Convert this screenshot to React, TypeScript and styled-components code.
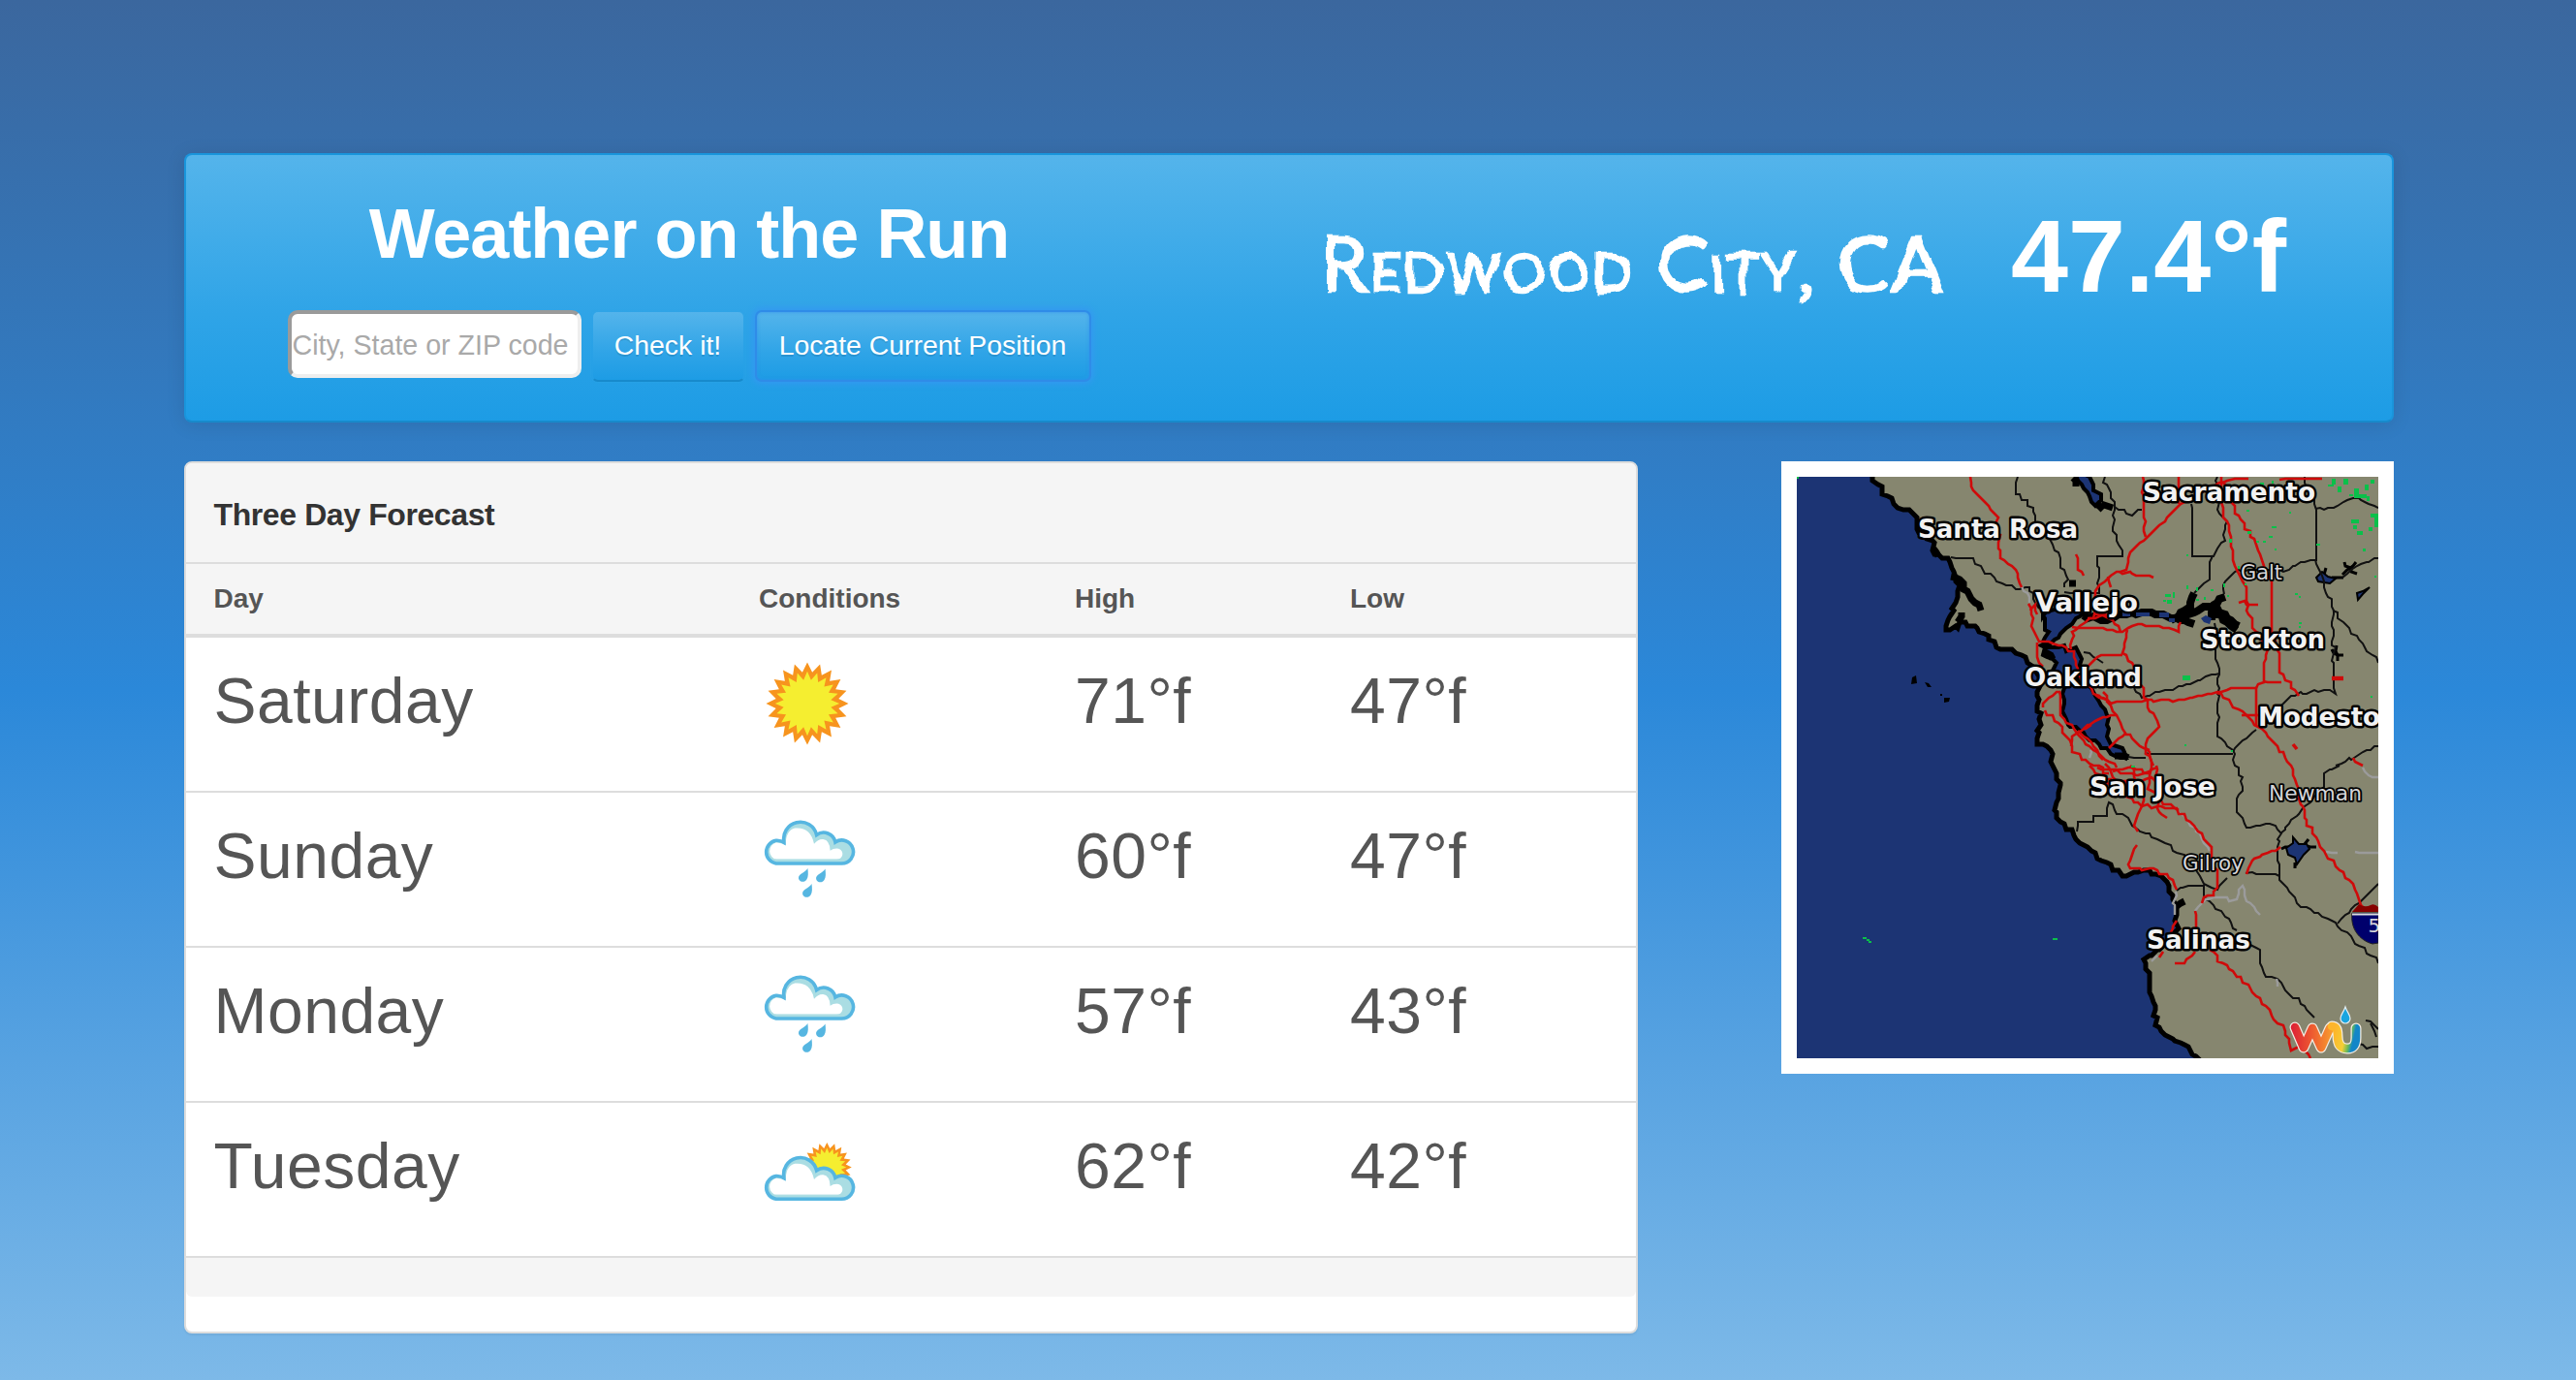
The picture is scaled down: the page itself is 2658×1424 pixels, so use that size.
import React from "react";
import styled, { createGlobalStyle } from "styled-components";

const SANS = '"Liberation Sans", Arial, sans-serif';

const GlobalStyle = createGlobalStyle`
  body {
    margin: 0;
    font-family: ${SANS};
    background: #7db9e8;
  }
  * { box-sizing: border-box; }
`;

const Page = styled.main`
  height: 1424px;
  padding: 158px 188px 0 190px;
  overflow: hidden;
  background: linear-gradient(to bottom, #3b679e 0%, #2b88d9 50%, #7db9e8 100%);
`;

const Banner = styled.header`
  display: flex;
  height: 278px;
  border: 2px solid #1995dc;
  border-bottom-color: #178acc;
  border-radius: 8px;
  background: linear-gradient(#54b4eb, #2fa4e7 60%, #1d9ce5);
  box-shadow: 0 2px 20px rgba(0, 0, 0, 0.1);
  color: #fff;
`;

const SearchArea = styled.div`
  display: flex;
  flex-direction: column;
  align-items: center;
  gap: 39px;
  width: 1038px;
  padding-top: 41px;
`;

const Title = styled.h1`
  margin: 0;
  font-size: 72px;
  line-height: 80px;
  font-weight: 700;
  letter-spacing: -1px;
`;

const SearchForm = styled.form`
  display: flex;
  align-items: flex-start;
  gap: 10px;
`;

const PlaceInput = styled.input`
  width: 303px;
  height: 70px;
  padding: 3px 1px 0;
  border: 4px inset;
  border-color: #9a9a9a #eeeeee #eeeeee #9a9a9a;
  border-style: solid;
  border-radius: 10px;
  background: #fff;
  font: 28.6px ${SANS};
  outline: none;
  &::placeholder { color: #a9a9a9; opacity: 1; }
`;

const ActionButton = styled.button<{ $width: number; $focused?: boolean }>`
  width: ${(p) => p.$width}px;
  height: 74px;
  padding: 0 0 2px;
  border: 2px solid ${(p) => (p.$focused ? "#2f8ce8" : "transparent")};
  border-bottom-color: ${(p) => (p.$focused ? "#2f8ce8" : "#178acc")};
  border-radius: 7px;
  background: linear-gradient(#54b4eb, #2fa4e7 60%, #1d9ce5) padding-box;
  box-shadow: ${(p) =>
    p.$focused
      ? "0 0 6px 2px #3598f2, inset 0 0 3px 1px rgba(47, 143, 240, 0.5)"
      : "0 0 0 1px rgba(47, 164, 231, 0.3)"};
  color: #fff;
  font: 28.4px ${SANS};
  white-space: nowrap;
  text-shadow: 0 2px 0 rgba(0, 0, 0, 0.1);
`;

const CurrentWeather = styled.div`
  display: flex;
  align-items: baseline;
  padding: 44px 0 0 132px;
  line-height: 120px;
  white-space: nowrap;
`;

const City = styled.span`
  width: 713px;
  font-family: Lato, "Open Sans", sans-serif;
  font-size: 79px;
  font-variant: small-caps;
  letter-spacing: 2.3px;
  -webkit-text-stroke: 2.4px #fff;
  filter: url(#handDrawn);
`;

const FilterDefs = styled.svg`
  position: absolute;
`;

const Temperature = styled.span`
  font-size: 106px;
  font-weight: 700;
`;

const Content = styled.div`
  display: flex;
  justify-content: space-between;
  align-items: flex-start;
  margin-top: 40px;
`;

const Panel = styled.section`
  width: 1500px;
  height: 900px;
  border: 2px solid #ddd;
  border-radius: 8px;
  background: #fff;
  box-shadow: 0 2px 2px rgba(0, 0, 0, 0.05);
  overflow: hidden;
`;

const PanelHeading = styled.h2`
  height: 104px;
  margin: 0;
  padding: 33px 28.5px 0;
  border-bottom: 2px solid #ddd;
  background: #f5f5f5;
  color: #333;
  font-size: 32px;
  line-height: 40px;
  letter-spacing: -0.4px;
`;

const Columns = styled.div`
  display: grid;
  grid-template-columns: 562.5px 326px 284px 1fr;
  padding-left: 28.5px;
  color: #555;
`;

const HeaderRow = styled(Columns)`
  height: 76px;
  padding-top: 16px;
  border-bottom: 4px solid #ddd;
  background: #f5f5f5;
  font-size: 28px;
  line-height: 40px;
  font-weight: 700;
`;

const ForecastRow = styled(Columns)`
  height: 160px;
  padding-top: 18px;
  border-bottom: 2px solid #ddd;
  font-size: 66px;
  line-height: 94px;
  letter-spacing: 0.5px;
`;

const IconCell = styled.div`
  line-height: 0;
`;

const PanelFooter = styled.div`
  height: 40px;
  border-radius: 0 0 6px 6px;
  background: #f5f5f5;
`;

const MapFrame = styled.figure`
  width: 632px;
  height: 632px;
  margin: 0;
  padding: 16px;
  background: #fff;
`;

type Pt = [number, number];

function star(cx: number, cy: number, outer: number, inner: number, points = 20) {
  const out: string[] = [];
  for (let i = 0; i < points * 2; i++) {
    const r = i % 2 ? inner : outer;
    const a = (Math.PI * i) / points - Math.PI / 2;
    out.push(`${(cx + r * Math.cos(a)).toFixed(2)},${(cy + r * Math.sin(a)).toFixed(2)}`);
  }
  return out.join(" ");
}

function Sun({ cx, cy, r }: { cx: number; cy: number; r: number }) {
  return (
    <g>
      <polygon points={star(cx, cy, r, r * 0.77)} fill="#f7941e" />
      <polygon points={star(cx, cy, r * 0.78, r * 0.58)} fill="#f5ee30" />
    </g>
  );
}

function Cloud({ y = 0 }: { y?: number }) {
  return (
    <g transform={`translate(-0.7 ${y})`}>
      <path
        d="M18.5 55 A12 12 0 0 1 18.5 31.3 Q23 31 26.8 33.5 A17 17 0 0 1 60.3 25.5 A12.3 12.3 0 0 1 79.6 33 A12 12 0 1 1 86 55 Z"
        fill="#aadde3"
        stroke="#56b6e1"
        strokeWidth="3.6"
      />
      <path
        d="M19 51 A9 9 0 0 1 18.5 33.5 Q24 33.5 28.5 36.5 Q28 21 38 18.5 Q54 17 57.7 34.7 Q62 29.5 67 30 Q74 31 74.3 41.7 Q78 39 83 39.7 Q87.5 41.5 87 46 Q86 50.5 81 51 Z"
        fill="#fff"
      />
      <path d="M18 51.5 H86" stroke="#aadde3" strokeWidth="2.6" strokeLinecap="round" opacity="0.75" />
    </g>
  );
}

function Drop({ x, y }: { x: number; y: number }) {
  return (
    <path
      transform={`translate(${x} ${y})`}
      d="M0 0 C0.6 5 0.8 8.5 -1 11.5 C-3 15 -8.5 14.5 -9.4 10.5 C-9.9 5.5 -3 5 0 0 Z"
      fill="#56b6e1"
    />
  );
}

type Condition = "sunny" | "rain" | "partly";

function WeatherIcon({ kind }: { kind: Condition }) {
  return (
    <svg width="100" height="100" viewBox="0 0 100 100">
      {kind === "sunny" && <Sun cx={50} cy={50} r={42.5} />}
      {kind === "rain" && (
        <>
          <Cloud />
          <Drop x={50.4} y={60} />
          <Drop x={68.5} y={60.5} />
          <Drop x={54.5} y={76} />
        </>
      )}
      {kind === "partly" && (
        <>
          <Sun cx={70.3} cy={48.5} r={25.5} />
          <Cloud y={26.3} />
        </>
      )}
    </svg>
  );
}

/* Breaks a line into short steps on a two-unit grid, as a low-resolution radar map has them. */
function stepped(pts: Pt[], wobble = 1.6) {
  const out: Pt[] = [];
  pts.forEach(([x, y], i) => {
    if (i === 0) {
      out.push([x, y]);
      return;
    }
    const [px, py] = pts[i - 1];
    const n = Math.max(1, Math.round(Math.hypot(x - px, y - py) / 5));
    const straight = px === x || py === y;
    for (let k = 1; k <= n; k++) {
      const t = k / n;
      const seed = Math.sin((x + k * 7) * 12.9898 + (y + k * 3) * 78.233) * 43758.5453;
      const j = k === n || straight ? 0 : (seed - Math.floor(seed) - 0.5) * 2 * wobble;
      out.push([
        Math.round((px + (x - px) * t + j) / 2) * 2,
        Math.round((py + (y - py) * t - j) / 2) * 2,
      ]);
    }
  });
  return out.map((p) => p.join(",")).join(" ");
}

const COAST: Pt[] = [
  [78, -2], [83, 8], [93, 20], [109, 33], [124, 41], [126, 58], [139, 65], [141, 80], [158, 88],
  [163, 103], [167, 111], [166, 121], [161, 138], [153, 158], [166, 156], [168, 150], [183, 153],
  [193, 161], [209, 178], [226, 181], [243, 195], [249, 205], [251, 255], [248, 275], [261, 281],
  [264, 298], [272, 315], [269, 331], [266, 343], [271, 355], [286, 370], [304, 386], [313, 396],
  [336, 411], [363, 406], [379, 415], [388, 431], [391, 451], [393, 465], [386, 478], [374, 488],
  [358, 498], [363, 511], [363, 528], [369, 545], [370, 565], [383, 578], [399, 586], [415, 602],
];

const WATER: Pt[][] = [
  [[254, 143], [259, 160], [254, 170], [262, 172], [270, 165], [283, 151], [300, 140], [280, 134], [258, 138], [254, 143]],
  [[252, 174], [258, 186], [268, 192], [262, 205], [280, 214], [292, 205], [290, 180], [270, 175], [252, 174]],
  [[276, 218], [286, 206], [303, 218], [311, 231], [320, 245], [322, 271], [336, 280], [340, 289], [328, 288], [308, 272], [296, 264], [280, 255], [275, 245], [276, 218]],
  [[288, -2], [300, 16], [308, 30], [314, 24], [306, 8], [298, -2]],
];

/* Small reservoirs keep their spiky outline, so they are drawn without the wobble. */
const LAKES: string[] = [
  "505,383 512,378 512,372 518,379 526,379 529,384 523,390 516,400 514,393 507,390",
  "536,104 542,98 548,103 556,105 550,110 538,108",
  "578,120 584,118 591,114 584,121 579,127",
];

const SPIKES: Pt[][] = [
  [[500, 384], [508, 382]],
  [[524, 379], [528, 374]],
  [[526, 381], [535, 381]],
  [[514, 398], [513, 404]],
  [[552, 104], [563, 103]],
  [[563, 101], [567, 96], [574, 92]],
  [[565, 88], [571, 94], [577, 99]],
  [[577, 88], [569, 96]],
  [[544, 101], [546, 94]],
  [[552, 178], [558, 184], [564, 184]],
  [[557, 174], [558, 190]],
];

const DELTA: Pt[][] = [
  [[296, 143], [319, 148], [336, 141], [366, 140], [386, 146], [409, 151]],
  [[386, 148], [393, 143], [405, 134], [409, 120]],
  [[396, 148], [413, 137], [429, 133], [440, 148], [453, 157]],
  [[429, 133], [436, 140], [455, 154]],
  [[429, 133], [441, 123]],
  [[429, 135], [428, 148]],
];

const BLOBS: Pt[][] = [
  [[159, 103], [168, 106], [176, 118], [189, 138]],
  [[170, 140], [166, 150]],
  [[254, 180], [264, 188]],
  [[309, 28], [316, 34]],
  [[314, 28], [326, 31]],
  [[285, 1], [288, 9]],
  [[281, 110], [288, 110]],
  [[392, 443], [399, 438]],
  [[328, 288], [342, 289]],
  [[141, 74], [146, 82]],
];

const COUNTIES: Pt[][] = [
  [[228, 0], [225, 17], [243, 31], [245, 45], [261, 66], [271, 83], [279, 106], [276, 113]],
  [[159, 83], [178, 83], [206, 108], [226, 115], [239, 113], [249, 135]],
  [[276, 119], [312, 119], [310, 81], [336, 81], [336, 75], [326, 55], [328, 25], [319, 8], [318, 0]],
  [[328, 31], [346, 39], [356, 33]],
  [[407, 28], [407, 81], [429, 81], [441, 65], [443, 45], [434, 33], [433, 0]],
  [[429, 81], [426, 88], [426, 106], [409, 120]],
  [[441, 121], [439, 111], [451, 97], [508, 96], [519, 88], [535, 85], [535, 33], [532, 20], [523, 0]],
  [[535, 33], [554, 31], [574, 21], [600, 31]],
  [[535, 85], [543, 108], [553, 138], [555, 223], [543, 220], [513, 225], [499, 236]],
  [[474, 261], [449, 283]],
  [[553, 138], [600, 191]],
  [[563, 104], [572, 96], [600, 83]],
  [[342, 289], [359, 289]],
  [[431, 151], [431, 188], [436, 198], [436, 203], [434, 268], [449, 281], [451, 298], [459, 310], [460, 323], [453, 331], [454, 345], [464, 361], [488, 358], [499, 368], [496, 381], [498, 415], [506, 423], [516, 440], [556, 460], [600, 501]],
  [[436, 203], [356, 228], [348, 218]],
  [[359, 285], [449, 285]],
  [[556, 298], [600, 278]],
  [[296, 181], [316, 191]],
  [[499, 368], [529, 335], [544, 320], [544, 305], [559, 298]],
  [[463, 409], [498, 411]],
  [[558, 461], [600, 420]],
  [[289, 366], [289, 355], [306, 355], [306, 350], [319, 349], [321, 336], [351, 363], [376, 376], [399, 390], [416, 411], [419, 420], [433, 425], [444, 413]],
  [[392, 427], [403, 421], [419, 421], [419, 431], [446, 456], [453, 468]],
  [[468, 483], [478, 488], [478, 501], [484, 516], [496, 518], [533, 558]],
  [[587, 561], [600, 569]],
  [[579, 585], [588, 589], [600, 588]],
  [[592, 564], [597, 578]],
];

const ROADS: Pt[][] = [
  [[179, 0], [179, 10], [193, 26], [207, 41], [209, 83], [226, 96], [232, 113]],
  [[239, 131], [244, 158], [249, 170], [269, 173], [286, 180], [289, 198], [296, 212], [311, 225], [324, 233]],
  [[241, 138], [246, 132], [248, 142]],
  [[248, 171], [248, 185], [253, 196]],
  [[288, 80], [289, 96], [295, 101]],
  [[283, 178], [284, 160], [306, 145], [308, 118], [321, 103], [339, 95], [343, 78], [358, 65], [379, 46], [396, 28], [439, 5], [466, 1]],
  [[498, 3], [504, 1], [542, 1]],
  [[357, 0], [359, 61]],
  [[394, 0], [394, 28]],
  [[321, 103], [324, 114]],
  [[333, 98], [346, 99], [368, 103]],
  [[438, 0], [439, 31], [448, 61], [453, 95], [463, 113], [463, 128], [473, 160], [485, 178], [481, 211], [473, 218]],
  [[439, 5], [449, 28], [461, 48], [476, 75], [481, 91], [489, 105], [489, 160], [497, 181], [498, 201], [518, 225]],
  [[481, 211], [499, 211]],
  [[456, 130], [476, 131]],
  [[284, 155], [316, 155], [336, 160], [346, 153], [369, 154], [394, 160], [395, 150]],
  [[308, 142], [326, 148], [334, 160]],
  [[306, 136], [318, 142], [300, 146]],
  [[341, 158], [336, 181], [348, 196], [358, 223], [373, 258], [359, 275], [368, 298]],
  [[300, 196], [314, 183], [336, 183]],
  [[308, 225], [324, 233], [346, 232], [399, 230], [433, 222], [453, 217], [474, 217], [474, 258]],
  [[433, 223], [463, 246], [476, 258], [496, 278], [509, 298], [518, 321], [523, 351], [543, 385], [576, 425], [586, 445]],
  [[459, 246], [476, 246]],
  [[316, 222], [329, 245], [339, 265], [363, 281]],
  [[296, 260], [312, 250], [329, 245]],
  [[339, 265], [321, 280]],
  [[574, 290], [584, 298]],
  [[271, 221], [271, 241], [289, 265], [306, 281], [330, 300]],
  [[256, 241], [266, 251], [283, 278], [293, 291], [306, 298], [322, 306]],
  [[254, 238], [259, 228], [271, 221]],
  [[283, 278], [284, 268], [304, 256]],
  [[290, 262], [304, 274], [316, 292]],
  [[302, 298], [318, 312], [340, 330], [356, 340], [386, 341], [399, 348], [413, 365], [428, 381], [428, 395], [433, 405], [433, 423], [429, 431], [419, 433], [417, 440]],
  [[310, 300], [330, 302], [350, 308], [372, 300]],
  [[320, 312], [345, 316], [366, 310], [376, 316]],
  [[318, 296], [330, 314], [352, 322]],
  [[344, 298], [350, 314], [358, 330], [356, 340]],
  [[360, 280], [366, 300], [362, 322], [372, 330]],
  [[326, 304], [346, 300], [364, 306]],
  [[356, 340], [349, 353], [351, 365]],
  [[371, 298], [373, 345], [381, 351]],
  [[371, 332], [394, 344]],
  [[351, 380], [343, 395], [344, 403], [368, 404], [388, 416], [391, 426]],
  [[411, 448], [413, 471]],
  [[499, 382], [469, 396], [464, 409]],
  [[426, 488], [453, 515], [474, 535], [503, 571], [509, 591], [522, 588], [529, 600]],
  [[411, 490], [399, 501], [389, 501]],
  [[378, 490], [374, 496]],
  [[386, 470], [392, 458]],
];

const GREY_ROADS: Pt[][] = [
  [[232, 113], [238, 120], [239, 130]],
  [[391, 428], [389, 452]],
  [[393, 345], [411, 361], [426, 385]],
  [[411, 448], [418, 440], [424, 435], [453, 436], [459, 421], [463, 438], [478, 451]],
  [[546, 387], [558, 387]],
  [[576, 387], [600, 387]],
  [[584, 300], [590, 308], [600, 310]],
  [[495, 518], [495, 526]],
  [[303, 282], [301, 290]],
  [[366, 500], [372, 494]],
];

/* x, y, width, height of each radar echo */
const RAIN: [number, number, number, number][] = [
  [0, 0, 2, 2], [68, 475, 4, 2], [72, 477, 3, 2], [74, 479, 3, 2], [264, 476, 5, 2],
  [552, 2, 4, 6], [548, 8, 6, 2], [564, 2, 5, 6], [558, 10, 4, 6], [575, 12, 5, 10], [580, 18, 8, 4],
  [586, 8, 4, 6], [588, 20, 3, 5], [592, 3, 4, 4], [592, 38, 8, 4], [596, 42, 4, 10], [572, 44, 8, 4],
  [574, 50, 4, 4], [578, 56, 6, 4], [590, 52, 4, 4], [584, 74, 3, 3], [464, 34, 3, 2], [465, 56, 4, 3],
  [490, 51, 5, 2], [481, 66, 3, 2], [487, 61, 4, 2], [474, 66, 3, 2], [446, 64, 3, 4], [493, 74, 2, 2],
  [508, 36, 2, 2], [486, 24, 2, 2], [536, 69, 4, 2], [455, 92, 2, 3], [402, 80, 2, 2], [380, 121, 6, 3],
  [382, 127, 5, 4], [388, 119, 2, 6], [402, 112, 2, 4], [378, 127, 3, 2], [412, 114, 2, 4], [427, 116, 3, 2],
  [440, 110, 2, 4], [444, 122, 2, 2], [514, 120, 3, 2], [518, 123, 2, 2], [518, 150, 3, 2], [518, 154, 2, 2],
  [398, 205, 8, 5], [592, 226, 2, 2], [400, 276, 2, 2], [448, 282, 2, 2], [345, 298, 4, 2], [478, 6, 4, 3],
  [484, 12, 4, 2], [460, 14, 6, 2], [474, 16, 4, 2], [462, 110, 2, 2], [560, 244, 10, 2], [490, 4, 2, 3],
  [570, 18, 4, 2], [596, 102, 2, 2], [412, 126, 3, 2], [420, 124, 2, 3],
];

interface Place {
  name: string;
  x: number;
  y: number;
  w: number;
  minor?: boolean;
}

const PLACES: Place[] = [
  { name: "Santa Rosa", x: 125, y: 63, w: 165 },
  { name: "Sacramento", x: 357, y: 25, w: 178 },
  { name: "Vallejo", x: 246, y: 139, w: 106 },
  { name: "Oakland", x: 235, y: 216, w: 121 },
  { name: "Stockton", x: 417, y: 177, w: 128 },
  { name: "Modesto", x: 476, y: 257, w: 126 },
  { name: "San Jose", x: 302, y: 329, w: 130 },
  { name: "Salinas", x: 361, y: 487, w: 107 },
  { name: "Galt", x: 458, y: 106, w: 43, minor: true },
  { name: "Newman", x: 487, y: 334, w: 96, minor: true },
  { name: "Gilroy", x: 398, y: 406, w: 63, minor: true },
];

const MapSvg = styled.svg`
  display: block;
  width: 600px;
  height: 600px;
  background: #1c3474;
`;

const PlaceLabel = styled.text<{ $minor?: boolean }>`
  font-family: "DejaVu Sans", Verdana, sans-serif;
  font-size: ${(p) => (p.$minor ? 21 : 27)}px;
  font-weight: ${(p) => (p.$minor ? 400 : 700)};
  fill: ${(p) => (p.$minor ? "#d4d4d8" : "#f2f2f2")};
  stroke: #000;
  stroke-width: ${(p) => (p.$minor ? 3.6 : 5)}px;
  stroke-linejoin: round;
  paint-order: stroke;
`;

const RouteNumber = styled.text`
  font: 20px "DejaVu Sans", Verdana, sans-serif;
  fill: #d4d4d8;
`;

function Lines({ lines, color, width }: { lines: Pt[][]; color: string; width: number }) {
  return (
    <g fill="none" stroke={color} strokeWidth={width} strokeLinejoin="miter">
      {lines.map((l, i) => (
        <polyline key={i} points={stepped(l)} />
      ))}
    </g>
  );
}

function RadarMap() {
  const coast = stepped(COAST, 2);
  return (
    <MapSvg viewBox="0 0 600 600">
      <defs>
        <linearGradient id="wuWarm" gradientUnits="userSpaceOnUse" x1="510" x2="554" y1="0" y2="0">
          <stop offset="0" stopColor="#dc1f35" />
          <stop offset="0.55" stopColor="#ef6230" />
          <stop offset="1" stopColor="#f9a12e" />
        </linearGradient>
        <linearGradient id="wuCool" gradientUnits="userSpaceOnUse" x1="554" x2="580" y1="574" y2="580">
          <stop offset="0" stopColor="#fdb52b" />
          <stop offset="0.45" stopColor="#f5cf36" />
          <stop offset="0.66" stopColor="#67b95a" />
          <stop offset="0.8" stopColor="#1286c8" />
        </linearGradient>
      </defs>
      <polygon points={`${coast} 602,602 602,-2`} fill="#86866f" />
      <polyline points={coast} fill="none" stroke="#000" strokeWidth="5" />
      <g fill="#1c3474" stroke="#000" strokeWidth="4">
        {WATER.map((w, i) => (
          <polygon key={i} points={stepped(w, 2.4)} />
        ))}
      </g>
      <Lines lines={BLOBS} color="#000" width={7} />
      <Lines lines={DELTA} color="#000" width={8} />
      <Lines lines={SPIKES} color="#000" width={3} />
      <g fill="#1c3474" stroke="#000" strokeWidth="2">
        {LAKES.map((l) => (
          <polygon key={l} points={l} />
        ))}
      </g>
      <g fill="#1c3474">
        <rect x="336" y="140" width="8" height="4" />
        <rect x="350" y="140" width="14" height="4" />
        <rect x="374" y="140" width="10" height="5" />
        <rect x="384" y="146" width="6" height="4" />
        <path d="M417 146 l5 -3 l6 3 l-2 6 l-6 -2z" />
      </g>
      <path
        d="M119 207 l4 -2 l1 8 l-6 1z M132 212 l4 1 l3 4 l-4 0z M152 228 l6 0 l-1 4 l-5 1z M148 224 h2 v2 h-2z"
        fill="#000"
      />
      <Lines lines={COUNTIES} color="#111" width={2} />
      <Lines lines={GREY_ROADS} color="#9b9b9b" width={2.4} />
      <Lines lines={ROADS} color="#cf0a0a" width={2.6} />
      <path d="M552 208 h12" stroke="#cf0a0a" strokeWidth="4.4" />
      <path d="M512 276 l4 5" stroke="#cf0a0a" strokeWidth="3.6" />
      <g fill="#0ac04a">
        {RAIN.map(([x, y, w, h], i) => (
          <rect key={i} x={x} y={y} width={w} height={h} />
        ))}
      </g>
      <path d="M573 450 C571 466 580 478 594 482 L600 481 V450 Z" fill="#00006c" stroke="#222" strokeWidth="1" />
      <path d="M573 449 L580 441 Q586 445 592 442 Q596 440 600 444 V449 Z" fill="#860000" />
      <path d="M573 451.500 H600" stroke="#ddd" strokeWidth="2" />
      <RouteNumber x="589.5" y="470">
        5
      </RouteNumber>
      {PLACES.map((p) => (
        <PlaceLabel
          key={p.name}
          $minor={p.minor}
          x={p.x}
          y={p.y}
          textLength={p.w}
          lengthAdjust="spacingAndGlyphs"
        >
          {p.name}
        </PlaceLabel>
      ))}
      <g fill="none" strokeLinecap="round" strokeLinejoin="round">
        <path d="M514 568 L523 589 L532 569 L541 589 L550 569" stroke="#f3ece2" strokeWidth="11" />
        <path d="M552 567 Q558 567 558 577 Q558 590 568 590 Q577 590 577 579 V569" stroke="#f3ece2" strokeWidth="11" />
        <path d="M514 568 L523 589 L532 569 L541 589 L550 569" stroke="url(#wuWarm)" strokeWidth="8.500" />
        <path d="M552 567 Q558 567 558 577 Q558 590 568 590 Q577 590 577 579 V569" stroke="url(#wuCool)" strokeWidth="8.500" />
      </g>
      <path d="M566 547 C568 553 571 555 571 559 A5 5 0 0 1 561 559 C561 555 564 553 566 547Z" fill="#18a5e0" stroke="#e6eef2" strokeWidth="1.200" />
    </MapSvg>
  );
}

const FORECAST: { day: string; kind: Condition; high: number; low: number }[] = [
  { day: "Saturday", kind: "sunny", high: 71, low: 47 },
  { day: "Sunday", kind: "rain", high: 60, low: 47 },
  { day: "Monday", kind: "rain", high: 57, low: 43 },
  { day: "Tuesday", kind: "partly", high: 62, low: 42 },
];

export default function App() {
  return (
    <Page>
      <GlobalStyle />
      <FilterDefs width="0" height="0" aria-hidden="true">
        <filter id="handDrawn" x="-2%" y="-10%" width="104%" height="120%">
          <feTurbulence type="fractalNoise" baseFrequency="0.035" numOctaves={2} seed={4} result="noise" />
          <feDisplacementMap in="SourceGraphic" in2="noise" scale={11} xChannelSelector="R" yChannelSelector="G" />
        </filter>
      </FilterDefs>
      <Banner>
        <SearchArea>
          <Title>Weather on the Run</Title>
          <SearchForm onSubmit={(e) => e.preventDefault()}>
            <PlaceInput placeholder="City, State or ZIP code" />
            <ActionButton type="submit" $width={159}>
              Check it!
            </ActionButton>
            <ActionButton type="button" $width={347} $focused>
              Locate Current Position
            </ActionButton>
          </SearchForm>
        </SearchArea>
        <CurrentWeather>
          <City>Redwood City, CA</City>
          <Temperature>47.4°f</Temperature>
        </CurrentWeather>
      </Banner>
      <Content>
        <Panel>
          <PanelHeading>Three Day Forecast</PanelHeading>
          <HeaderRow>
            <div>Day</div>
            <div>Conditions</div>
            <div>High</div>
            <div>Low</div>
          </HeaderRow>
          {FORECAST.map((f) => (
            <ForecastRow key={f.day}>
              <div>{f.day}</div>
              <IconCell>
                <WeatherIcon kind={f.kind} />
              </IconCell>
              <div>{f.high}°f</div>
              <div>{f.low}°f</div>
            </ForecastRow>
          ))}
          <PanelFooter />
        </Panel>
        <MapFrame>
          <RadarMap />
        </MapFrame>
      </Content>
    </Page>
  );
}
